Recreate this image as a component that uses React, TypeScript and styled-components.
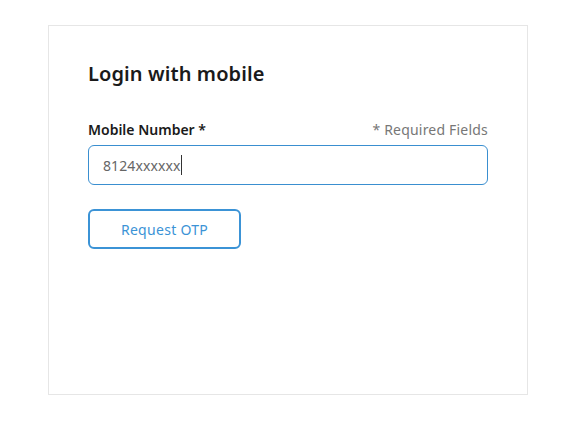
import React from 'react';
import styled, {createGlobalStyle} from 'styled-components';

const GlobalStyle = createGlobalStyle`
    html, body {
        margin: 0;
        padding: 0;
        background: #ffffff;
        font-family: "Noto Sans", "Open Sans", sans-serif;
    }
`

const Page = styled.div`
    width: 561px;
    height: 422px;
    padding: 25px 0 0 48px;
    box-sizing: border-box;
`

const Card = styled.div`
    width: 480px;
    height: 370px;
    box-sizing: border-box;
    border: 1px solid #e6e6e6;
    padding: 35px 39px;
    display: flex;
    flex-direction: column;
`

const Title = styled.h2`
    margin: 0;
    font-size: 20px;
    font-weight: 600;
    color: #1a1a1a;
    line-height: 26px;
    letter-spacing: 0.1px;
`

const LabelRow = styled.div`
    display: flex;
    justify-content: space-between;
    align-items: baseline;
    margin-top: 34px;
`

const Label = styled.label`
    font-size: 14px;
    font-weight: 600;
    color: #1a1a1a;
    line-height: 18px;
`

const Hint = styled.span`
    font-size: 14px;
    color: #777777;
    letter-spacing: 0.2px;
    line-height: 18px;
`

const Field = styled.div`
    margin-top: 6px;
    height: 40px;
    box-sizing: border-box;
    border: 1px solid #3a8fd0;
    border-radius: 6px;
    padding: 0 14px;
    display: flex;
    align-items: center;
    font-size: 14px;
    color: #666666;
    letter-spacing: 0.1px;
`

const Caret = styled.span`
    display: inline-block;
    width: 1px;
    height: 20px;
    background: #333333;
    margin-left: 1px;
`

const OtpButton = styled.button`
    margin-top: 24px;
    width: 153px;
    height: 40px;
    border: 2px solid #3b93d6;
    border-radius: 6px;
    background: #ffffff;
    color: #3b93d6;
    font-family: inherit;
    font-size: 14px;
    cursor: pointer;
    letter-spacing: 0.3px;
`

export default function App(){
    return (
        <>
            <GlobalStyle/>
            <Page>
                <Card>
                    <Title>Login with mobile</Title>

                    <LabelRow>
                        <Label>Mobile Number *</Label>
                        <Hint>* Required Fields</Hint>
                    </LabelRow>

                    <Field>
                        8124xxxxxx<Caret/>
                    </Field>

                    <div>
                        <OtpButton>Request OTP</OtpButton>
                    </div>
                </Card>
            </Page>
        </>
    )
}
